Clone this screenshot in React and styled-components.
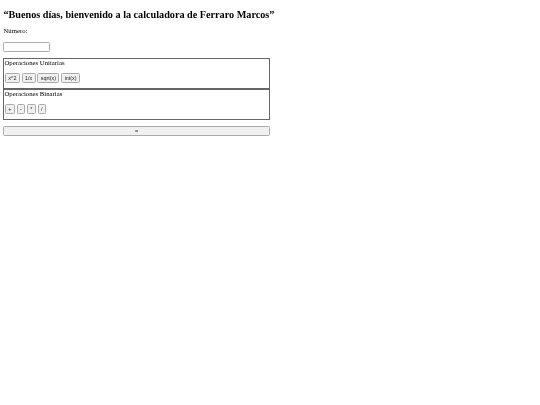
import styled, { createGlobalStyle } from "styled-components"

const GlobalStyle = createGlobalStyle`
    body {
        margin: 0;
        background: #fff;
        color: #000;
        font-family: "Liberation Serif", serif;
        font-size: 6.75px;
    }
`
const Page = styled.div`
    padding: 8.6px 3.4px 0;
    will-change: transform;
`
const Title = styled.h2`
    font-size: 10.2px;
    line-height: 11.6px;
    font-weight: bold;
    margin: 0 0 6.8px;
`
const Label = styled.p`
    line-height: 8px;
    margin: 0 0 7px;
`
const NumberInput = styled.input`
    display: block;
    width: 47px;
    height: 10.5px;
    box-sizing: border-box;
    border: 1px solid #aaa;
    border-radius: 1.5px;
    margin-bottom: 5.5px;
`
const Calculator = styled.div`
    width: 266.6px;
`
const Section = styled.div`
    border: 1px solid #666;
    height: 31px;
    box-sizing: border-box;
`
const SectionTitle = styled.div`
    line-height: 7.6px;
`
const Buttons = styled.div`
    display: flex;
    gap: 1.8px;
    margin: 6.4px 0 0 0.4px;
`
const OpButton = styled.button`
    font-family: "Liberation Sans", sans-serif;
    font-size: 5.4px;
    height: 10px;
    padding: 0 2.4px;
    background: #f0f0f0;
    border: 1px solid #aaa;
    border-radius: 1.5px;
    color: #222;
`
const EqualsButton = styled(OpButton)`
    display: block;
    width: 100%;
    height: 10.5px;
    margin-top: 6px;
`

const unary = ["x^2", "1/x", "sqrt(x)", "int(x)"]
const binary = ["+", "-", "*", "/"]

function App() {
    return (
        <>
            <GlobalStyle />
            <Page>
                <Title>“Buenos días, bienvenido a la calculadora de Ferraro Marcos”</Title>
                <Label>Número:</Label>
                <NumberInput type="text" />
                <Calculator>
                    <Section>
                        <SectionTitle>Operaciones Unitarias</SectionTitle>
                        <Buttons>
                            {unary.map((op) => <OpButton key={op}>{op}</OpButton>)}
                        </Buttons>
                    </Section>
                    <Section>
                        <SectionTitle>Operaciones Binarias</SectionTitle>
                        <Buttons>
                            {binary.map((op) => <OpButton key={op}>{op}</OpButton>)}
                        </Buttons>
                    </Section>
                    <EqualsButton>=</EqualsButton>
                </Calculator>
            </Page>
        </>
    )
}

export default App
